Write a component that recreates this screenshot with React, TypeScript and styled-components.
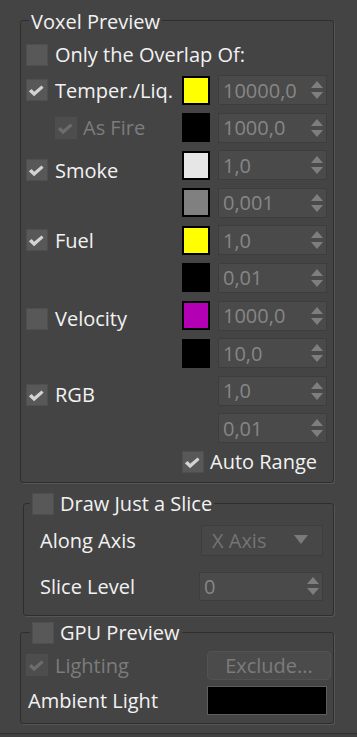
import styled, { createGlobalStyle } from 'styled-components';

const GlobalStyle = createGlobalStyle`
  html, body {
    margin: 0;
    padding: 0;
    background: #444444;
  }
  body {
    font-family: 'Open Sans', 'Noto Sans', sans-serif;
    color: #f2f2f2;
  }
`;

const Panel = styled.div`
  width: 357px;
  height: 737px;
  box-sizing: border-box;
  padding: 20px 0 0 20px;
  display: flex;
  flex-direction: column;
  background: #444444;
  font-size: 20px;
  overflow: hidden;
`;

const Group = styled.div<{ $indent?: number; $top?: number }>`
  box-sizing: border-box;
  width: ${p => 314 - (p.$indent ?? 0)}px;
  margin: ${p => p.$top ?? 0}px 0 0 ${p => p.$indent ?? 0}px;
  border: 1px solid #2e2e2e;
  border-radius: 3px;
  box-shadow: 1px 1px 0 #565656;
  display: flex;
  flex-direction: column;
`;

const Legend = styled.div<{ $offset: number }>`
  align-self: flex-start;
  display: flex;
  align-items: center;
  gap: 6px;
  height: 26px;
  margin: -13px 0 0 ${p => p.$offset}px;
  padding: 0 2px;
  background: #444444;
  white-space: nowrap;
`;

const Box = styled.span<{ $disabled?: boolean }>`
  flex: none;
  box-sizing: border-box;
  width: 22px;
  height: 22px;
  background: ${p => (p.$disabled ? '#4d4d4d' : '#585858')};
  border: 1px solid #4e4e4e;
  display: flex;
  align-items: center;
  justify-content: center;
`;

const Text = styled.span<{ $disabled?: boolean }>`
  color: ${p => (p.$disabled ? '#7c7c7c' : '#f2f2f2')};
  white-space: nowrap;
`;

const Check = ({ on, disabled }: { on?: boolean; disabled?: boolean }) => (
  <Box $disabled={disabled}>
    {on && (
      <svg width="22" height="22" viewBox="0 0 22 22">
        <path
          d="M2 12.4 L5.2 10 L7.8 12.8 L16 6 L18.2 8.6 L7.8 17.8 Z"
          fill={disabled ? '#6c6c6c' : '#d4d4d4'}
        />
      </svg>
    )}
  </Box>
);

const CheckRow = styled.div<{ $indent?: number; $gap?: number }>`
  display: flex;
  align-items: center;
  gap: ${p => p.$gap ?? 7}px;
  padding-left: ${p => p.$indent ?? 0}px;
`;

const TopRow = styled(CheckRow)`
  margin: 9px 0 0 5px;
  height: 23px;
`;

const Grid = styled.div`
  display: grid;
  grid-template-columns: 148px 28px 109px;
  grid-auto-rows: 30px;
  column-gap: 8px;
  row-gap: 7.6px;
  margin: 9px 0 0 5px;
`;

const Cell = styled.div<{ $row: number; $col: number; $shift?: number }>`
  grid-row: ${p => p.$row};
  grid-column: ${p => p.$col};
  display: flex;
  align-items: center;
  transform: translateY(${p => p.$shift ?? 0}px);
`;

const Swatch = styled.div<{ $color: string; $w?: number; $h?: number; $edge?: string; $bw?: number }>`
  box-sizing: border-box;
  width: ${p => p.$w ?? 28}px;
  height: ${p => p.$h ?? 29}px;
  margin-right: ${p => (p.$w ? 4 : 0)}px;
  background: ${p => p.$color};
  border: ${p => p.$bw ?? 2}px solid ${p => p.$edge ?? '#000'};
`;

const Spin = styled.div<{ $w?: number; $h?: number }>`
  box-sizing: border-box;
  width: ${p => p.$w ?? 109}px;
  height: ${p => p.$h ?? 30}px;
  display: flex;
  align-items: center;
  justify-content: space-between;
  padding: 0 2px 0 4px;
  background: #4a4a4a;
  border: 1px solid #3d3d3d;
  color: #868686;
`;

const Arrows = () => (
  <svg width="14" height="20" viewBox="0 0 14 20">
    <path d="M1 8 L7 1 L13 8 Z" fill="#7e7e7e" />
    <path d="M1 12 L13 12 L7 19 Z" fill="#7e7e7e" />
  </svg>
);

const Spinner = ({ value, w, h }: { value: string; w?: number; h?: number }) => (
  <Spin $w={w} $h={h}>
    <span>{value}</span>
    <Arrows />
  </Spin>
);

const AutoRow = styled(CheckRow)`
  margin: 7.6px 0 0 161px;
  height: 22px;
`;

const GroupBody = styled.div<{ $pad: string }>`
  display: flex;
  flex-direction: column;
  padding: ${p => p.$pad};
`;

const FieldRow = styled.div<{ $top: number; $h: number }>`
  display: grid;
  grid-template-columns: 1fr auto;
  align-items: center;
  height: ${p => p.$h}px;
  margin-top: ${p => p.$top}px;
`;

const Dropdown = styled.div`
  box-sizing: border-box;
  width: 122px;
  height: 31px;
  display: flex;
  align-items: center;
  justify-content: space-between;
  padding: 0 14px 0 10px;
  background: #474747;
  border: 1px solid #3d3d3d;
  color: #747474;
`;

const Button = styled.div`
  box-sizing: border-box;
  width: 124px;
  height: 29px;
  display: flex;
  align-items: center;
  justify-content: center;
  background: #4b4b4b;
  border: 1px solid #525252;
  border-radius: 4px;
  color: #7c7c7c;
`;

const Footer = styled.div`
  margin: 9px 0 0 -20px;
  height: 4px;
  border-top: 1px solid #2f2f2f;
  background: #404040;
`;

type Row = { row: number; color?: string; edge?: boolean; value: string };

const rows: Row[] = [
  { row: 1, color: '#ffff00', edge: true, value: '10000,0' },
  { row: 2, color: '#000000', value: '1000,0' },
  { row: 3, color: '#e6e6e6', edge: true, value: '1,0' },
  { row: 4, color: '#808080', edge: true, value: '0,001' },
  { row: 5, color: '#ffff00', edge: true, value: '1,0' },
  { row: 6, color: '#000000', value: '0,01' },
  { row: 7, color: '#b400b4', edge: true, value: '1000,0' },
  { row: 8, color: '#000000', value: '10,0' },
  { row: 9, value: '1,0' },
  { row: 10, value: '0,01' },
];

export default function App() {
  return (
    <>
      <GlobalStyle />
      <Panel>
        <Group>
          <Legend $offset={8}>Voxel Preview</Legend>
          <TopRow>
            <Check />
            <Text>Only the Overlap Of:</Text>
          </TopRow>
          <Grid>
            <Cell $row={1} $col={1}>
              <CheckRow>
                <Check on />
                <Text>Temper./Liq.</Text>
              </CheckRow>
            </Cell>
            <Cell $row={2} $col={1}>
              <CheckRow $indent={29} $gap={6}>
                <Check on disabled />
                <Text $disabled>As Fire</Text>
              </CheckRow>
            </Cell>
            <Cell $row={3} $col={1} $shift={5}>
              <CheckRow>
                <Check on />
                <Text>Smoke</Text>
              </CheckRow>
            </Cell>
            <Cell $row={5} $col={1}>
              <CheckRow>
                <Check on />
                <Text>Fuel</Text>
              </CheckRow>
            </Cell>
            <Cell $row={7} $col={1} $shift={3}>
              <CheckRow>
                <Check />
                <Text>Velocity</Text>
              </CheckRow>
            </Cell>
            <Cell $row={9} $col={1} $shift={4}>
              <CheckRow>
                <Check on />
                <Text>RGB</Text>
              </CheckRow>
            </Cell>
            {rows.map(r => (
              <Cell key={`s${r.row}`} $row={r.row} $col={2}>
                {r.color && <Swatch $color={r.color} $edge={r.edge ? '#000' : r.color} />}
              </Cell>
            ))}
            {rows.map(r => (
              <Cell key={`v${r.row}`} $row={r.row} $col={3}>
                <Spinner value={r.value} />
              </Cell>
            ))}
          </Grid>
          <AutoRow $gap={6}>
            <Check on />
            <Text>Auto Range</Text>
          </AutoRow>
          <GroupBody $pad="0 0 9px 0" />
        </Group>

        <Group $indent={3} $top={20}>
          <Legend $offset={6}>
            <Check />
            <Text>Draw Just a Slice</Text>
          </Legend>
          <GroupBody $pad="0 10px 14px 16px">
            <FieldRow $top={8} $h={31}>
              <Text>Along Axis</Text>
              <Dropdown>
                <span>X Axis</span>
                <svg width="14" height="10" viewBox="0 0 14 10">
                  <path d="M0 0 L14 0 L7 9 Z" fill="#7a7a7a" />
                </svg>
              </Dropdown>
            </FieldRow>
            <FieldRow $top={16} $h={29}>
              <Text>Slice Level</Text>
              <Spinner value="0" w={124} h={29} />
            </FieldRow>
          </GroupBody>
        </Group>

        <Group $top={16}>
          <Legend $offset={9}>
            <Check />
            <Text>GPU Preview</Text>
          </Legend>
          <GroupBody $pad="0 2px 8px 5px">
            <FieldRow $top={5} $h={29}>
              <CheckRow>
                <Check on disabled />
                <Text $disabled>Lighting</Text>
              </CheckRow>
              <Button>Exclude...</Button>
            </FieldRow>
            <FieldRow $top={6} $h={29}>
              <CheckRow $indent={2}>
                <Text>Ambient Light</Text>
              </CheckRow>
              <Swatch $color="#000" $w={120} $h={29} $edge="#5e5e5e" $bw={1} />
            </FieldRow>
          </GroupBody>
        </Group>
        <Footer />
      </Panel>
    </>
  );
}
